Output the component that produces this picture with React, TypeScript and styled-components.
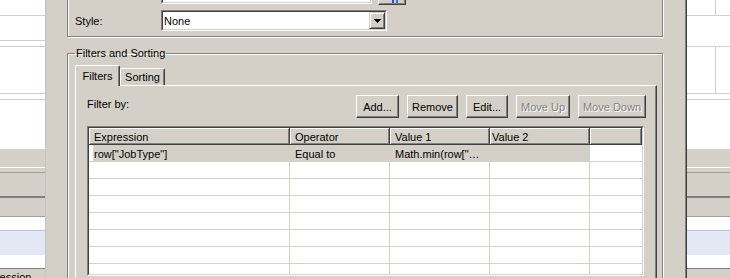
import React from 'react';
import styled, { createGlobalStyle } from 'styled-components';

const FACE = '#d4d0c8';
const SHADOW = '#808080';
const DARK = '#404040';
const GRID = '#d4d0c8';
const PANE_LINE = '#cfcfcf';
const FONT = '"Liberation Sans", Arial, sans-serif';

const GlobalStyle = createGlobalStyle`
  html, body {
    margin: 0;
    padding: 0;
    overflow: hidden;
  }
  body {
    background: ${FACE};
    font-family: ${FONT};
    font-size: 11px;
    color: #000;
  }
`;

const Screen = styled.div`
  display: flex;
  width: 730px;
  height: 278px;
  overflow: hidden;
`;

// background application panes, seen on either side of the dialog
const SidePane = styled.div<{ $width: number; $edge?: boolean }>`
  flex: none;
  width: ${(p) => p.$width}px;
  display: flex;
  flex-direction: column;
  border-right: ${(p) => (p.$edge ? '1px solid #c4c4c4' : 'none')};
  overflow: hidden;
`;

const PaneRow = styled.div<{ $h: number; $bg?: string; $line?: string; $lineW?: number; $top?: string }>`
  flex: none;
  display: flex;
  height: ${(p) => p.$h}px;
  background: ${(p) => p.$bg ?? '#fff'};
  border-top: ${(p) => (p.$top ? `1px solid ${p.$top}` : 'none')};
  border-bottom: ${(p) => (p.$line ? `${p.$lineW ?? 1}px solid ${p.$line}` : 'none')};
  overflow: hidden;
`;

const PaneCell = styled.div<{ $split?: boolean }>`
  flex: ${(p) => (p.$split ? '0 0 28px' : '1')};
  border-right: ${(p) => (p.$split ? `1px solid ${PANE_LINE}` : 'none')};
`;

const PaneCaption = styled.div`
  margin: 2px 0 0 -23px;
  line-height: 13px;
  white-space: nowrap;
`;

type RowSpec = { h: number; bg?: string; line?: string; lineW?: number; top?: string; split?: boolean; text?: string };

const lowerRows: RowSpec[] = [
  { h: 18, bg: FACE, line: '#fff' },
  { h: 4, bg: FACE, line: '#a0a0a0' },
  { h: 23, bg: FACE, line: SHADOW, lineW: 2 },
  { h: 18, bg: FACE, line: '#a0a0a0' },
  { h: 13 },
  { h: 24, bg: '#e4e8f5', top: '#b9c2de' },
  { h: 13, line: SHADOW },
  { h: 20, bg: FACE },
];

const leftRows: RowSpec[] = [
  { h: 15, line: PANE_LINE },
  { h: 24, line: PANE_LINE },
  { h: 5, line: PANE_LINE },
  { h: 46, line: PANE_LINE },
  { h: 5, line: PANE_LINE },
  { h: 49 },
  ...lowerRows.slice(0, -1),
  { h: 20, bg: FACE, text: 'Expression' },
];

const rightRows: RowSpec[] = [
  { h: 15, line: PANE_LINE, split: true },
  { h: 30, line: PANE_LINE },
  { h: 46, line: PANE_LINE, split: true },
  { h: 5, line: PANE_LINE },
  { h: 49 },
  ...lowerRows,
];

function Pane({ rows, width, edge }: { rows: RowSpec[]; width: number; edge?: boolean }) {
  return (
    <SidePane $width={width} $edge={edge}>
      {rows.map((r, i) => (
        <PaneRow key={i} $h={r.h} $bg={r.bg} $line={r.line} $lineW={r.lineW} $top={r.top}>
          {r.split && <PaneCell $split />}
          <PaneCell>{r.text && <PaneCaption>{r.text}</PaneCaption>}</PaneCell>
        </PaneRow>
      ))}
    </SidePane>
  );
}

const Dialog = styled.div`
  flex: none;
  width: 641px;
  box-sizing: border-box;
  display: flex;
  flex-direction: column;
  background: ${FACE};
  border-right: 1px solid ${DARK};
  box-shadow: inset -1px 0 ${SHADOW};
  padding: 0 23px 0 21px;
`;

const TopGroup = styled.div`
  margin-top: -27px;
  display: flex;
  flex-direction: column;
  gap: 5px;
  border: 1px solid ${SHADOW};
  box-shadow: inset 1px 1px #fff, 1px 1px #fff;
  padding: 8px 6px 5px 7px;
`;

const FormRow = styled.div`
  display: flex;
  align-items: center;
`;

const FieldLabel = styled.div`
  flex: none;
  width: 86px;
  padding-top: 1px;
  line-height: 13px;
`;

const Sunken = styled.div<{ $w: number }>`
  flex: none;
  width: ${(p) => p.$w}px;
  height: 21px;
  box-sizing: border-box;
  border: 1px solid;
  border-color: ${SHADOW} #fff #fff ${SHADOW};
`;

const SunkenInner = styled.div`
  height: 100%;
  box-sizing: border-box;
  display: flex;
  align-items: center;
  background: #fff;
  border: 1px solid;
  border-color: ${DARK} ${FACE} ${FACE} ${DARK};
`;

const FieldText = styled.div`
  flex: 1;
  padding: 1px 0 0 1px;
  line-height: 13px;
  white-space: nowrap;
  overflow: hidden;
`;

const DropButton = styled.div`
  flex: none;
  width: 16px;
  height: 17px;
  box-sizing: border-box;
  display: flex;
  align-items: center;
  justify-content: center;
  background: ${FACE};
  border: 1px solid;
  border-color: ${FACE} ${DARK} ${DARK} ${FACE};
  box-shadow: inset 1px 1px #fff, inset -1px -1px ${SHADOW};
`;

const RaisedButton = styled.button<{ $w: number }>`
  flex: none;
  width: ${(p) => p.$w}px;
  height: 23px;
  box-sizing: border-box;
  padding: 1px 0 0;
  background: ${FACE};
  border: 1px solid;
  border-color: #fff ${DARK} ${DARK} #fff;
  border-radius: 0;
  box-shadow: inset -1px -1px ${SHADOW};
  font: 11px ${FONT};
  color: #000;

  &:disabled {
    color: ${SHADOW};
    text-shadow: 1px 1px #fff;
  }
`;

const BrowseButton = styled(RaisedButton)`
  margin-left: 6px;
  display: flex;
  align-items: flex-end;
  justify-content: center;
  padding: 0 0 1px;
`;

const GroupBox = styled.fieldset`
  margin: 10px 0 0;
  min-inline-size: 0;
  border: 1px solid ${SHADOW};
  box-shadow: inset 1px 1px #fff, 1px 1px #fff;
  padding: 5px 5px 0 7px;
`;

const Legend = styled.legend`
  padding: 0 1px;
  line-height: 13px;
`;

const TabStrip = styled.div`
  display: flex;
  align-items: flex-end;
  height: 20px;
`;

const Tab = styled.div<{ $active?: boolean }>`
  position: relative;
  z-index: ${(p) => (p.$active ? 1 : 0)};
  width: 45px;
  height: ${(p) => (p.$active ? 21 : 17)}px;
  margin-bottom: ${(p) => (p.$active ? -1 : 0)}px;
  box-sizing: border-box;
  display: flex;
  align-items: center;
  justify-content: center;
  background: ${FACE};
  border: 1px solid #fff;
  border-bottom: none;
  border-right-color: ${DARK};
  border-radius: 2px 2px 0 0;
  box-shadow: inset -1px 0 ${SHADOW};
  line-height: 13px;
`;

const TabPanel = styled.div`
  border: 1px solid;
  border-color: #fff ${DARK} ${DARK} #fff;
  box-shadow: inset -1px -1px ${SHADOW};
  padding: 9px 10px 12px 11px;
`;

const Toolbar = styled.div`
  display: flex;
  justify-content: space-between;
  align-items: flex-start;
  height: 23px;
  margin-bottom: 8px;
`;

const ToolbarLabel = styled.div`
  padding-top: 3px;
  line-height: 13px;
`;

const ButtonGroup = styled.div`
  display: flex;
  gap: 8px;
`;

const TableFrame = styled.div`
  width: 557px;
  height: 150px;
  box-sizing: border-box;
  border: 1px solid;
  border-color: ${SHADOW} #fff #fff ${SHADOW};
`;

const TableInner = styled.div`
  height: 100%;
  box-sizing: border-box;
  overflow: hidden;
  background: #fff;
  border: 1px solid;
  border-color: ${DARK} ${FACE} ${FACE} ${DARK};
`;

const Grid = styled.div`
  display: grid;
  grid-template-columns: 201px 100px 100px 100px 1fr;
  grid-auto-rows: 17px;
`;

const HeaderCell = styled.div<{ $pad: number }>`
  box-sizing: border-box;
  background: ${FACE};
  border-right: 1px solid ${DARK};
  border-bottom: 1px solid ${DARK};
  box-shadow: inset 1px 1px #fff, inset -1px -1px ${SHADOW};
  padding: 2px 0 0 ${(p) => p.$pad}px;
  line-height: 14px;
  white-space: nowrap;
  overflow: hidden;
`;

const DataCell = styled.div<{ $pad: number; $selected?: boolean; $indent?: boolean; $last?: boolean }>`
  box-sizing: border-box;
  background: ${(p) => (p.$selected ? FACE : '#fff')};
  border-right: ${(p) => (p.$last ? 'none' : `1px solid ${p.$selected ? FACE : GRID}`)};
  border-bottom: 1px solid ${(p) => (p.$selected ? FACE : GRID)};
  box-shadow: ${(p) => (p.$indent ? 'inset 4px 0 #fff' : 'none')};
  padding: 2px 0 0 ${(p) => p.$pad}px;
  line-height: 14px;
  white-space: nowrap;
  overflow: hidden;
`;

const columns = [
  { title: 'Expression', pad: 5 },
  { title: 'Operator', pad: 5 },
  { title: 'Value 1', pad: 5 },
  { title: 'Value 2', pad: 2 },
  { title: '', pad: 5 },
];

const filters = [{ expression: 'row["JobType"]', operator: 'Equal to', value1: 'Math.min(row["…', value2: '' }];

const buttons = [
  { label: 'Add...', w: 43 },
  { label: 'Remove', w: 51 },
  { label: 'Edit...', w: 42 },
  { label: 'Move Up', w: 54, disabled: true },
  { label: 'Move Down', w: 68, disabled: true },
];

const ROW_COUNT = 8;

function ArrowDown() {
  return (
    <svg width="7" height="4" viewBox="0 0 7 4" shapeRendering="crispEdges">
      <path d="M0 0h7v1H0zM1 1h5v1H1zM2 2h3v1H2zM3 3h1v1H3z" fill="#000" />
    </svg>
  );
}

function ExpressionIcon() {
  return (
    <svg width="16" height="16" viewBox="0 0 16 16" shapeRendering="crispEdges">
      <path d="M4 3h8v2H4zM8 5h2v11H8zM11 8h3v1h-3z" fill="#2a57b8" />
      <path d="M12 9h2v7h-2z" fill="#3d6fd6" />
    </svg>
  );
}

function FilterTable() {
  const rows = Array.from({ length: ROW_COUNT }, (_, i) => filters[i]);
  return (
    <TableFrame>
      <TableInner>
        <Grid>
          {columns.map((c, i) => (
            <HeaderCell key={i} $pad={c.pad}>
              {c.title}
            </HeaderCell>
          ))}
          {rows.map((row, r) => {
            const values = row ? [row.expression, row.operator, row.value1, row.value2, ''] : ['', '', '', '', ''];
            return values.map((v, c) => (
              <DataCell
                key={`${r}-${c}`}
                $pad={columns[c].pad}
                $selected={r === 0 && c < 4}
                $indent={r === 0 && c === 0}
                $last={c === columns.length - 1}
              >
                {v}
              </DataCell>
            ));
          })}
        </Grid>
      </TableInner>
    </TableFrame>
  );
}

export default function App() {
  return (
    <>
      <GlobalStyle />
      <Screen>
        <Pane rows={leftRows} width={45} edge />
        <Dialog>
          <TopGroup>
            <FormRow>
              <FieldLabel>Data Set:</FieldLabel>
              <Sunken $w={211}>
                <SunkenInner>
                  <FieldText>Data Set 1</FieldText>
                </SunkenInner>
              </Sunken>
              <BrowseButton $w={28}>
                <ExpressionIcon />
              </BrowseButton>
            </FormRow>
            <FormRow>
              <FieldLabel>Style:</FieldLabel>
              <Sunken $w={226}>
                <SunkenInner>
                  <FieldText>None</FieldText>
                  <DropButton>
                    <ArrowDown />
                  </DropButton>
                </SunkenInner>
              </Sunken>
            </FormRow>
          </TopGroup>
          <GroupBox>
            <Legend>Filters and Sorting</Legend>
            <TabStrip>
              <Tab $active>Filters</Tab>
              <Tab>Sorting</Tab>
            </TabStrip>
            <TabPanel>
              <Toolbar>
                <ToolbarLabel>Filter by:</ToolbarLabel>
                <ButtonGroup>
                  {buttons.map((b) => (
                    <RaisedButton key={b.label} $w={b.w} disabled={b.disabled}>
                      {b.label}
                    </RaisedButton>
                  ))}
                </ButtonGroup>
              </Toolbar>
              <FilterTable />
            </TabPanel>
          </GroupBox>
        </Dialog>
        <Pane rows={rightRows} width={43} />
      </Screen>
    </>
  );
}
